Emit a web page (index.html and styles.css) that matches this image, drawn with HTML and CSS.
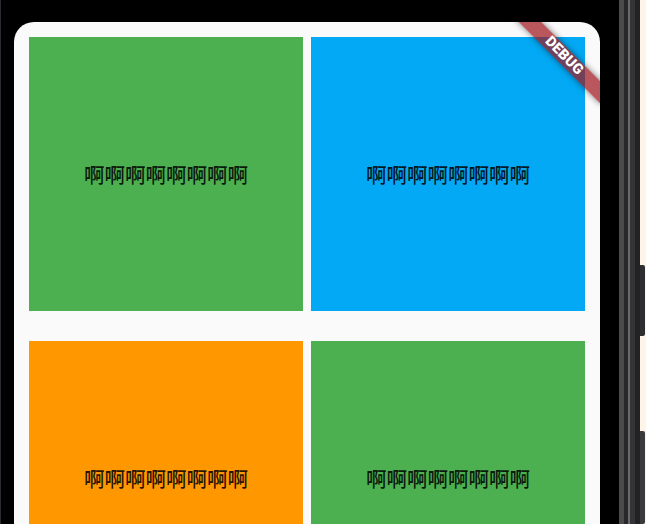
FILE: index.html
```html
<!DOCTYPE html>
<html>
<head>
<meta charset="utf-8">
<link rel="stylesheet" href="styles.css">
</head>
<body>
<div class="device">
  <div class="edge-left"></div>
  <div class="bezel-left"></div>
  <div class="screen">
    <div class="grid">
      <div class="tile green"><span class="label">啊啊啊啊啊啊啊啊</span></div>
      <div class="tile blue"><span class="label">啊啊啊啊啊啊啊啊</span></div>
      <div class="tile orange"><span class="label">啊啊啊啊啊啊啊啊</span></div>
      <div class="tile green"><span class="label">啊啊啊啊啊啊啊啊</span></div>
    </div>
    <div class="banner"><span>DEBUG</span></div>
  </div>
  <div class="bezel-right"></div>
  <div class="band b1"></div>
  <div class="band b2"></div>
  <div class="band b3"></div>
  <div class="band b4"></div>
  <div class="band b5"></div>
  <div class="desk">
    <div class="button btn1"></div>
    <div class="button btn2"></div>
  </div>
</div>
</body>
</html>
```
FILE: styles.css
```css
html, body {
  margin: 0;
  padding: 0;
  background: #000;
}
.device {
  width: 646px;
  height: 524px;
  overflow: hidden;
  display: flex;
  align-items: stretch;
  background: #000;
}
.edge-left {
  width: 1px;
  background: #2b2b31;
  flex: none;
}
.bezel-left {
  width: 13px;
  flex: none;
}
.screen {
  position: relative;
  flex: none;
  width: 586px;
  margin-top: 22px;
  background: #fafafa;
  border-radius: 20px 20px 0 0;
  overflow: hidden;
  padding: 15px 15px 0 15px;
  box-sizing: border-box;
}
.grid {
  display: grid;
  grid-template-columns: 274px 274px;
  grid-auto-rows: 274px;
  column-gap: 8px;
  row-gap: 30px;
}
.tile {
  display: flex;
  align-items: center;
  justify-content: center;
}
.green { background: #4caf50; }
.blue { background: #03a9f4; }
.orange { background: #ff9800; }
.label {
  font-family: "Noto Sans CJK SC", sans-serif;
  font-size: 20.5px;
  font-weight: 500;
  line-height: 1;
  color: rgba(0, 0, 0, 0.87);
  white-space: nowrap;
}
.banner {
  position: absolute;
  left: 490px;
  top: 26px;
  width: 120px;
  height: 16px;
  background: rgba(160, 24, 30, 0.72);
  box-shadow: 0 0 6px rgba(0, 0, 0, 0.5);
  transform: rotate(45deg);
  transform-origin: 50% 50%;
  display: flex;
  align-items: center;
  justify-content: center;
}
.banner span {
  font-family: Roboto, "Liberation Sans", sans-serif;
  font-weight: 900;
  font-size: 14.5px;
  line-height: 1;
  color: #fff;
  letter-spacing: 0.2px;
}
.bezel-right {
  width: 19px;
  flex: none;
}
.band { flex: none; }
.b1 { width: 5px; background: #4b4b4d; }
.b2 { width: 4px; background: #28282a; }
.b3 { width: 2px; background: #6a6a6c; }
.b4 { width: 5px; background: #343436; }
.b5 { width: 5px; background: #222224; }
.desk {
  flex: none;
  width: 6px;
  background: #fdf6e8;
  display: flex;
  flex-direction: column;
  padding-top: 265px;
  gap: 95px;
}
.button {
  width: 5px;
  background: #2e2e30;
  border-radius: 0 2px 2px 0;
}
.btn1 { height: 92px; }
.btn2 { height: 120px; background: #3a3a3c; }
```
